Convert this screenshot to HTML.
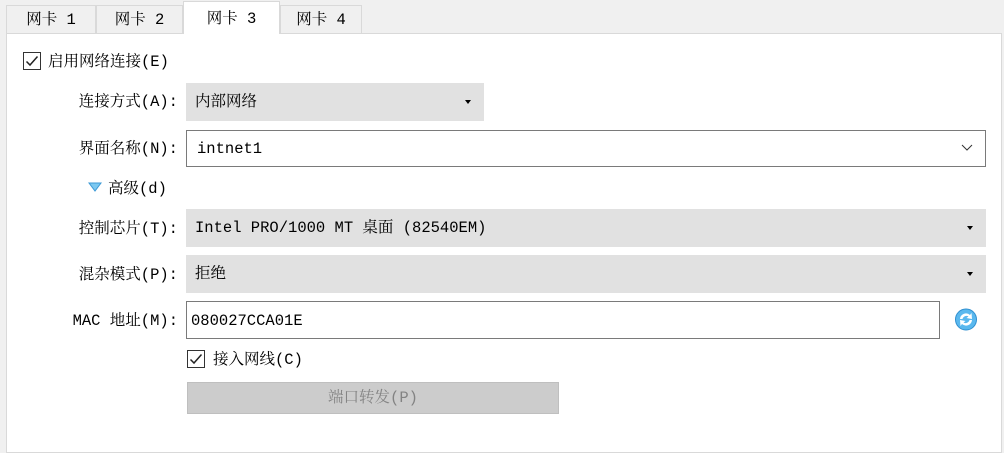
<!DOCTYPE html>
<html><head><meta charset="utf-8"><style>
*{margin:0;padding:0;box-sizing:border-box}
body{width:1004px;height:440px;background:#f0f0f0;position:relative;overflow:hidden;font-family:"Liberation Mono","Noto Serif CJK SC","Noto Serif CJK JP","Noto Sans CJK SC",monospace;font-size:15.5px;color:#000}
.a{position:absolute}
.tab{position:absolute;top:5px;height:29px;border:1px solid #d9d9d9;background:#f0f0f0;text-align:center;line-height:28px}
.panel{position:absolute;left:6px;top:33px;width:996px;height:420px;background:#fff;border:1px solid #d9d9d9}
.lbl{position:absolute;text-align:right;width:172px;left:6px;line-height:20px}
.cb{position:absolute;background:#e1e1e1;padding-left:9px}
.arr{position:absolute;right:13px;top:50%;margin-top:-2px;width:0;height:0;border-left:3px solid transparent;border-right:3px solid transparent;border-top:4px solid #000}
.inp{position:absolute;background:#fff;border:1px solid #7a7a7a;padding-left:10px}
.chk{position:absolute;width:18px;height:18px;border:1px solid #333;background:#fff}
</style></head><body>
<div class="panel"></div>
<div class="tab" style="left:6px;width:90px">网卡 1</div>
<div class="tab" style="left:96px;width:87px">网卡 2</div>
<div class="tab" style="left:280px;width:82px">网卡 4</div>
<div class="tab" style="left:183px;top:1px;height:33px;width:97px;background:#fff;border-bottom:none;line-height:34px">网卡 3</div>

<div class="chk" style="left:23px;top:52px"><svg width="16" height="16" viewBox="0 0 16 16"><path d="M2.5 8.5 L6 12 L13.5 3.5" fill="none" stroke="#222" stroke-width="1.5"/></svg></div>
<div class="a" style="left:48px;top:52px;line-height:20px">启用网络连接(E)</div>

<div class="lbl" style="top:92px">连接方式(A):</div>
<div class="cb" style="left:186px;top:83px;width:298px;height:38px;line-height:39px">内部网络<div class="arr"></div></div>

<div class="lbl" style="top:139px">界面名称(N):</div>
<div class="inp" style="left:186px;top:130px;width:800px;height:37px;line-height:37px">intnet1
<svg class="a" style="right:12px;top:13px" width="12" height="8" viewBox="0 0 12 8"><path d="M1 1 L6 6 L11 1" fill="none" stroke="#333" stroke-width="1"/></svg></div>

<svg class="a" style="left:88px;top:182px" width="14" height="10" viewBox="0 0 14 10"><path d="M1 1 L13 1 L7 9 Z" fill="#7cc8f0" stroke="#3d9ad6" stroke-width="1"/></svg>
<div class="a" style="left:108px;top:179px;line-height:20px">高级(d)</div>

<div class="lbl" style="top:219px">控制芯片(T):</div>
<div class="cb" style="left:186px;top:209px;width:800px;height:38px;line-height:39px">Intel PRO/1000 MT 桌面 (82540EM)<div class="arr"></div></div>

<div class="lbl" style="top:265px">混杂模式(P):</div>
<div class="cb" style="left:186px;top:255px;width:800px;height:38px;line-height:39px">拒绝<div class="arr"></div></div>

<div class="lbl" style="top:311px">MAC 地址(M):</div>
<div class="inp" style="left:186px;top:301px;width:754px;height:38px;line-height:38px;padding-left:4px">080027CCA01E</div>
<svg class="a" style="left:954px;top:307px" width="24" height="25" viewBox="0 0 24 25"><circle cx="12" cy="12.5" r="10.5" fill="#5ab8ee" stroke="#2f8fd0"/><path d="M6 12 A6 6 0 0 1 16 8 L17.5 6 L18 12 L12.5 11 L14.5 9.5 A4 4 0 0 0 8.5 12 Z M18 13 A6 6 0 0 1 8 17 L6.5 19 L6 13 L11.5 14 L9.5 15.5 A4 4 0 0 0 15.5 13 Z" fill="#fff"/></svg>

<div class="chk" style="left:187px;top:350px"><svg width="16" height="16" viewBox="0 0 16 16"><path d="M2.5 8.5 L6 12 L13.5 3.5" fill="none" stroke="#222" stroke-width="1.5"/></svg></div>
<div class="a" style="left:213px;top:350px;line-height:20px">接入网线(C)</div>

<div class="a" style="left:187px;top:382px;width:372px;height:32px;background:#cccccc;border:1px solid #bfbfbf;color:#838383;text-align:center;line-height:31px">端口转发(P)</div>
</body></html>
